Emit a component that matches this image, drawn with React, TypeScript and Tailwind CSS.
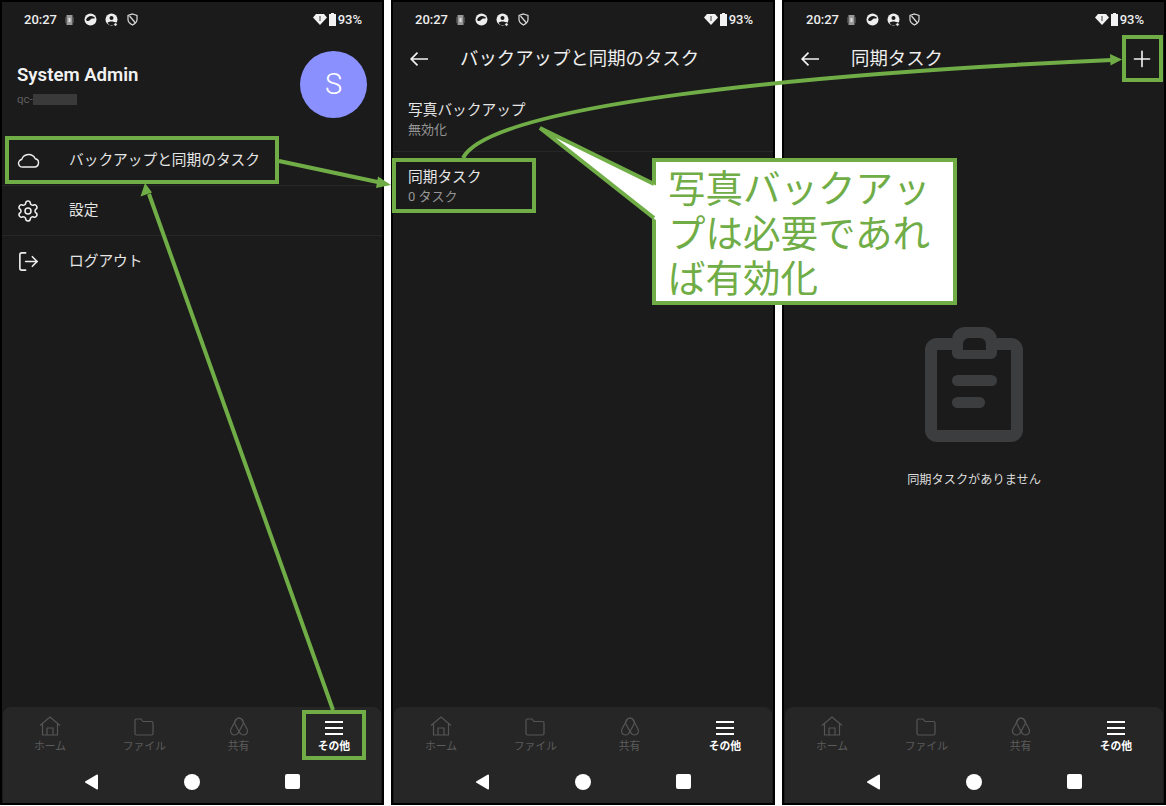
import { LogOut, Plus, Settings } from "lucide-react";
import type { ReactNode } from "react";

const FONT = "font-['Roboto','Noto_Sans_CJK_JP',sans-serif]";

const StatusBar = () => (
  <div className="flex h-[34px] shrink-0 items-center justify-between pl-[22px] pr-[20px] pt-[1px] text-[13px] font-medium text-[#eeeeee]">
    <div className="flex items-center">
      <span>20:27</span>
      {/* vibrate */}
      <svg className="ml-[8px]" width="9" height="12" viewBox="0 0 9 12">
        <rect x="1.5" y="1" width="6" height="10" fill="#999" />
        <path d="M0 3v6M9 3v6" stroke="#777" strokeWidth="1" />
        <rect x="3.5" y="4" width="2" height="4" fill="#ddd" />
      </svg>
      {/* palette-ish */}
      <svg className="ml-[10px]" width="13" height="13" viewBox="0 0 13 13">
        <circle cx="6.5" cy="6.5" r="6" fill="#eee" />
        <path d="M2 7c1-3 3-4 5-4 2 0 3.500 1 4 2-1 1-3 0-4 1-1 1-2 2-3 2-1 0-1.500-.5-2-1z" fill="#1b1b1b" />
      </svg>
      {/* person */}
      <svg className="ml-[8px]" width="13" height="14" viewBox="0 0 13 14">
        <circle cx="6.500" cy="6.500" r="6" fill="#eee" />
        <circle cx="6.500" cy="5" r="2" fill="#1b1b1b" />
        <path d="M2.500 10c1-2 7-2 8 0l-2 2H4.500z" fill="#1b1b1b" />
        <circle cx="10.500" cy="11.500" r="1.800" fill="#eee" stroke="#1b1b1b" />
      </svg>
      {/* shield */}
      <svg className="ml-[9px]" width="11" height="13" viewBox="0 0 11 13" fill="none" stroke="#ddd" strokeWidth="1.200">
        <path d="M5.500 1l4.500 1.500v4c0 3-2.500 4.500-4.500 5.500C3.500 11 1 9.500 1 6.500v-4z" />
        <path d="M2.500 3l6 7" />
      </svg>
    </div>
    <div className="flex items-center">
      <svg width="14" height="11" viewBox="0 0 14 11">
        <path d="M0 3.500L3 0h8l3 3.500L7 11z" fill="#f2f2f2" />
        <path d="M7 2v5" stroke="#999" strokeWidth="2" />
      </svg>
      <svg className="ml-[2px]" width="7" height="13" viewBox="0 0 7 13">
        <path d="M2 0h3v1h2v12H0V1h2z" fill="#f2f2f2" />
      </svg>
      <span className="ml-[2px]">93%</span>
    </div>
  </div>
);

const HomeIcon = () => (
  <svg width="22" height="20" viewBox="0 0 22 20" fill="none" stroke="currentColor" strokeWidth="1.200">
    <path d="M1 9.500L11 1l10 8.500M3.500 8v11h15V8" />
    <path d="M8 19v-7h6v7" />
  </svg>
);

const FolderIcon = () => (
  <svg width="20" height="18" viewBox="0 0 20 18" fill="none" stroke="currentColor" strokeWidth="1.200">
    <path d="M1 2.500a1.500 1.500 0 0 1 1.500-1.500h4.500l2 2.500h8.500a1.500 1.500 0 0 1 1.500 1.500v10.500a1.500 1.500 0 0 1-1.500 1.500h-15a1.500 1.500 0 0 1-1.500-1.500z" />
  </svg>
);

const ShareIcon = () => (
  <svg width="20" height="19" viewBox="0 0 20 19" fill="none" stroke="currentColor" strokeWidth="1.200">
    <path d="M10 1c2 0 3 1.500 4 3.500l4 7.500c1.500 3-.5 6-3.500 6-2.500 0-3.500-1.500-4.500-3.500L6 7c-1.500-3 1.500-6 4-6z" />
    <path d="M10 1c-2 0-3 1.500-4 3.500L2 12c-1.500 3 .5 6 3.500 6 2.500 0 3.500-1.500 4.500-3.500L14 7c1.500-3-1.500-6-4-6z" />
  </svg>
);

const BottomNav = () => {
  const items: { label: string; icon: ReactNode }[] = [
    { label: "ホーム", icon: <HomeIcon /> },
    { label: "ファイル", icon: <FolderIcon /> },
    { label: "共有", icon: <ShareIcon /> },
  ];
  return (
    <div className="mx-[1px] shrink-0 rounded-t-[8px] bg-[#262626]">
      <div className="flex h-[50px] items-end pb-[3px]">
        {items.map((item) => (
          <div key={item.label} className="flex w-[95px] flex-col items-center text-[#555555]">
            <div className="flex h-[23px] items-end">{item.icon}</div>
            <span className="mt-[3px] text-[10.8px] leading-[15px] text-[#5c5c5c]">{item.label}</span>
          </div>
        ))}
        <div className="ml-[1px] flex w-[95px] flex-col items-center text-white">
          <div className="flex h-[23px] flex-col items-center justify-end gap-[4px] pb-[1px]">
            <div className="h-[2px] w-[18px] bg-white" />
            <div className="h-[2px] w-[18px] bg-white" />
            <div className="h-[2px] w-[18px] bg-white" />
          </div>
          <span className="mt-[3px] text-[10.8px] font-bold leading-[15px]">その他</span>
        </div>
      </div>
      <div className="flex h-[46px] items-center pl-[81px] pt-[3px]">
        <svg width="16" height="16" viewBox="0 0 16 16">
          <path d="M14 1.500v13a1 1 0 0 1-1.500.8L1.500 8.800a1 1 0 0 1 0-1.600L12.500.7A1 1 0 0 1 14 1.500z" fill="#ffffff" />
        </svg>
        <div className="ml-[84px] h-[16px] w-[16px] rounded-full bg-white" />
        <div className="ml-[85px] h-[15px] w-[15px] rounded-[2px] bg-white" />
      </div>
    </div>
  );
};

const Phone = ({ children }: { children: ReactNode }) => (
  <div className={`flex h-[805px] w-[384px] shrink-0 flex-col border-2 border-black bg-[#1b1b1b] ${FONT}`}>
    <StatusBar />
    <div className="flex min-h-0 flex-1 flex-col">{children}</div>
    <BottomNav />
  </div>
);

const CloudIcon = () => (
  <svg width="23" height="15" viewBox="0 0 23 15" fill="none" stroke="#eeeeee" strokeWidth="1.400" strokeLinejoin="round">
    <path d="M6 14H17.500a4.200 4.200 0 0 0 .7-8.300A7.300 7.300 0 0 0 4.700 6.500 3.800 3.800 0 0 0 6 14z" />
  </svg>
);

const MenuRow = ({ icon, label, divider }: { icon: ReactNode; label: string; divider?: boolean }) => (
  <div className={`flex h-[50px] items-center pl-[15px] ${divider ? "border-b border-[#272727]" : ""}`}>
    <div className="flex w-[52px] text-[#eeeeee]">{icon}</div>
    <span className="text-[14.7px] text-[#e6e6e6]">{label}</span>
  </div>
);

const MenuScreen = () => (
  <Phone>
    <div className="flex h-[100px] items-start justify-between pl-[15px] pr-[15px] pt-[15px]">
      <div className="pt-[10px]">
        <div className="text-[18.6px] font-semibold leading-[28px] text-[#f2f2f2]">System Admin</div>
        <div className="mt-[2px] flex items-center text-[11.5px] leading-[16px] text-[#5f5f5f]">
          <span>qc-</span>
          <div className="h-[11px] w-[44px] bg-[#3a3a3a] blur-[0.5px]" />
        </div>
      </div>
      <div className="flex h-[67px] w-[67px] items-center justify-center rounded-full bg-[#8a91ff] text-[29px] font-light text-white">
        S
      </div>
    </div>
    <MenuRow divider icon={<CloudIcon />} label="バックアップと同期のタスク" />
    <MenuRow divider icon={<Settings size={24} strokeWidth={1.5} className="-ml-[1px]" />} label="設定" />
    <MenuRow icon={<LogOut size={23} strokeWidth={1.7} />} label="ログアウト" />
  </Phone>
);

const Header = ({ title, action }: { title: string; action?: ReactNode }) => (
  <div className="flex h-[47px] shrink-0 items-center pb-[1px] pl-[17px] pr-[9px]">
    <svg width="18" height="14" viewBox="0 0 18 14" fill="none" stroke="#f2f2f2" strokeWidth="1.700">
      <path d="M18 7H1.500M7.500 .7L1.200 7l6.300 6.300" />
    </svg>
    <span className="ml-[32px] text-[18.4px] text-[#efefef]">{title}</span>
    {action && <div className="ml-auto flex">{action}</div>}
  </div>
);

const ListRow = ({ title, sub, divider }: { title: string; sub: string; divider?: boolean }) => (
  <div className={`flex h-[69px] flex-col justify-center pl-[15px] ${divider ? "border-b border-[#272727] pt-[5px]" : ""}`}>
    <span className="text-[14.7px] leading-[20px] text-[#e6e6e6]">{title}</span>
    <span className="text-[13px] leading-[20px] text-[#959595]">{sub}</span>
  </div>
);

const BackupScreen = () => (
  <Phone>
    <Header title="バックアップと同期のタスク" />
    <ListRow divider title="写真バックアップ" sub="無効化" />
    <ListRow title="同期タスク" sub="0 タスク" />
  </Phone>
);

const ClipboardIcon = () => (
  <svg width="100" height="116" viewBox="0 0 100 116" fill="none">
    <path
      d="M28 17H13a6 6 0 0 0-6 6v80a6 6 0 0 0 6 6h74a6 6 0 0 0 6-6V23a6 6 0 0 0-6-6H73"
      stroke="#3c3d3f"
      strokeWidth="12"
    />
    <path
      fillRule="evenodd"
      d="M28 26V13A13 13 0 0 1 41 0H60A13 13 0 0 1 73 13V26a6 6 0 0 1-6 6H34a6 6 0 0 1-6-6zM39 23h23v-6a6 6 0 0 0-6-6H45a6 6 0 0 0-6 6z"
      fill="#3c3d3f"
    />
    <rect x="28" y="48" width="45" height="11" rx="5.500" fill="#3c3d3f" />
    <rect x="28" y="70" width="33" height="11" rx="5.500" fill="#3c3d3f" />
  </svg>
);

const SyncScreen = () => (
  <Phone>
    <Header title="同期タスク" action={<Plus size={26} strokeWidth={1.5} className="text-[#f2f2f2]" />} />
    <div className="flex flex-col items-center pt-[244px]">
      <ClipboardIcon />
      <span className="mt-[28px] text-[12.2px] leading-[18px] text-[#dddddd]">同期タスクがありません</span>
    </div>
  </Phone>
);

const BOX = "pointer-events-none absolute border-4 border-[#70ad47]";

const Annotations = () => (
  <>
    <div className={`${BOX} left-[5px] top-[136px] h-[48px] w-[274px]`} />
    <div className={`${BOX} left-[302px] top-[710px] h-[50px] w-[64px]`} />
    <div className={`${BOX} left-[392px] top-[158px] h-[55px] w-[144px]`} />
    <div className={`${BOX} left-[1122px] top-[35px] h-[47px] w-[41px]`} />
    <div className={`absolute left-[652px] top-[158px] h-[147px] w-[305px] border-4 border-[#70ad47] bg-white px-[12px] pt-[5px] text-[37.5px] leading-[45px] text-[#70ad47] ${FONT}`}>
      写真バックアップは必要であれば有効化
    </div>
    <svg className="pointer-events-none absolute left-0 top-0" width="1166" height="806" viewBox="0 0 1166 806" fill="none">
      {/* callout tail */}
      <path d="M657 186L540 128L657 221z" fill="#ffffff" />
      <path d="M654 184L540 128L654 218" stroke="#70ad47" strokeWidth="4" />
      {/* arrows */}
      <path d="M279 161L380 182.500" stroke="#70ad47" strokeWidth="4" />
      <path d="M391 185L378 176.500L376 188z" fill="#70ad47" />
      <path d="M333 710L149 194" stroke="#70ad47" strokeWidth="4" />
      <path d="M145 183L140.500 196.500L152 192.500z" fill="#70ad47" />
      <path d="M463 158C490 105 800 74 1112 60" stroke="#70ad47" strokeWidth="4" />
      <path d="M1122 59.500L1110 54L1110.500 65.500z" fill="#70ad47" />
    </svg>
  </>
);

const App = () => (
  <div className="relative h-[806px] w-[1166px] overflow-hidden bg-white">
    <div className="flex gap-[7px]">
      <MenuScreen />
      <BackupScreen />
      <SyncScreen />
    </div>
    <Annotations />
  </div>
);

export default App;
